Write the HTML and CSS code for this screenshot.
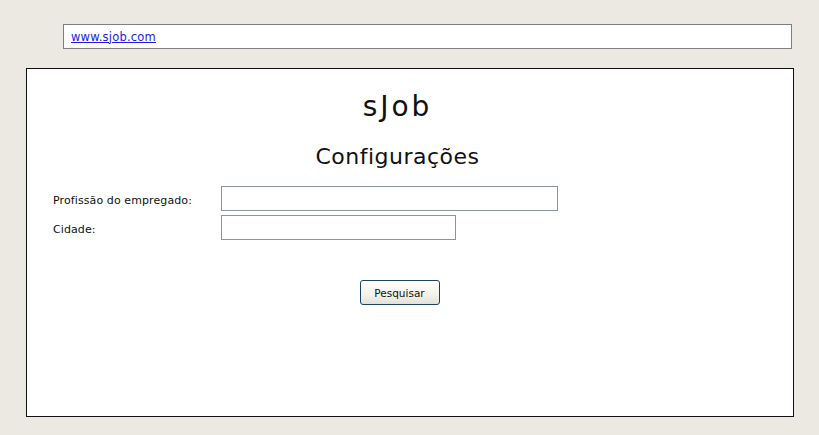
FILE: index.html
```html
<!DOCTYPE html>
<html>
<head>
<meta charset="utf-8">
<link rel="stylesheet" href="styles.css">
</head>
<body>
<div class="urlbar"><a href="#" class="url">www.sjob.com</a></div>
<div class="panel">
  <h1 class="title">sJob</h1>
  <h2 class="subtitle">Configurações</h2>
  <div class="form">
    <div class="row">
      <label class="label">Profissão do empregado:</label>
      <div class="field field-wide"></div>
    </div>
    <div class="row">
      <label class="label">Cidade:</label>
      <div class="field field-narrow"></div>
    </div>
  </div>
  <div class="actions">
    <button class="btn">Pesquisar</button>
  </div>
</div>
</body>
</html>
```
FILE: styles.css
```css
html, body {
  margin: 0;
  padding: 0;
  background: #ece9e3;
}
body {
  width: 819px;
  height: 435px;
  overflow: hidden;
  padding-top: 24px;
  box-sizing: border-box;
}
.urlbar {
  margin-left: 63px;
  width: 729px;
  height: 25px;
  box-sizing: border-box;
  border: 1px solid #7f7f7f;
  background: #fff;
  display: flex;
  align-items: center;
  padding-left: 7px;
}
.url {
  font-family: "DejaVu Sans", sans-serif;
  font-size: 11.5px;
  color: #1a1ae6;
  text-decoration: underline;
  letter-spacing: 0.2px;
}
.panel {
  margin-top: 19px;
  margin-left: 26px;
  width: 768px;
  height: 349px;
  box-sizing: border-box;
  border: 1px solid #111;
  background: #fff;
  padding: 20px 50px 0 25px;
  font-family: "DejaVu Sans", sans-serif;
}
.title {
  margin: 0;
  font-weight: normal;
  font-size: 28px;
  line-height: 36px;
  text-align: center;
  color: #111;
  letter-spacing: 3px;
}
.subtitle {
  margin: 17px 0 0 0;
  font-weight: normal;
  font-size: 22px;
  line-height: 30px;
  text-align: center;
  color: #111;
  letter-spacing: 0.5px;
}
.form {
  margin-top: 14px;
  display: flex;
  flex-direction: column;
  gap: 4px;
}
.row {
  display: flex;
  align-items: center;
}
.label {
  width: 169px;
  padding: 3px 0 0 1px;
  box-sizing: border-box;
  font-size: 11px;
  color: #111;
  letter-spacing: 0.1px;
}
.field {
  height: 25px;
  box-sizing: border-box;
  border: 1px solid #8796a6;
  background: #fff;
}
.field-wide { width: 337px; }
.field-narrow { width: 235px; }
.actions {
  margin-top: 40px;
  display: flex;
  justify-content: center;
  padding-left: 4px;
}
.btn {
  width: 80px;
  height: 25px;
  border: 1px solid #1f3f66;
  border-radius: 3px;
  background: linear-gradient(#ffffff, #f3f2ec 60%, #e3e1d6);
  font-family: "DejaVu Sans", sans-serif;
  font-size: 10.5px;
  color: #111;
  padding: 0;
}
```
